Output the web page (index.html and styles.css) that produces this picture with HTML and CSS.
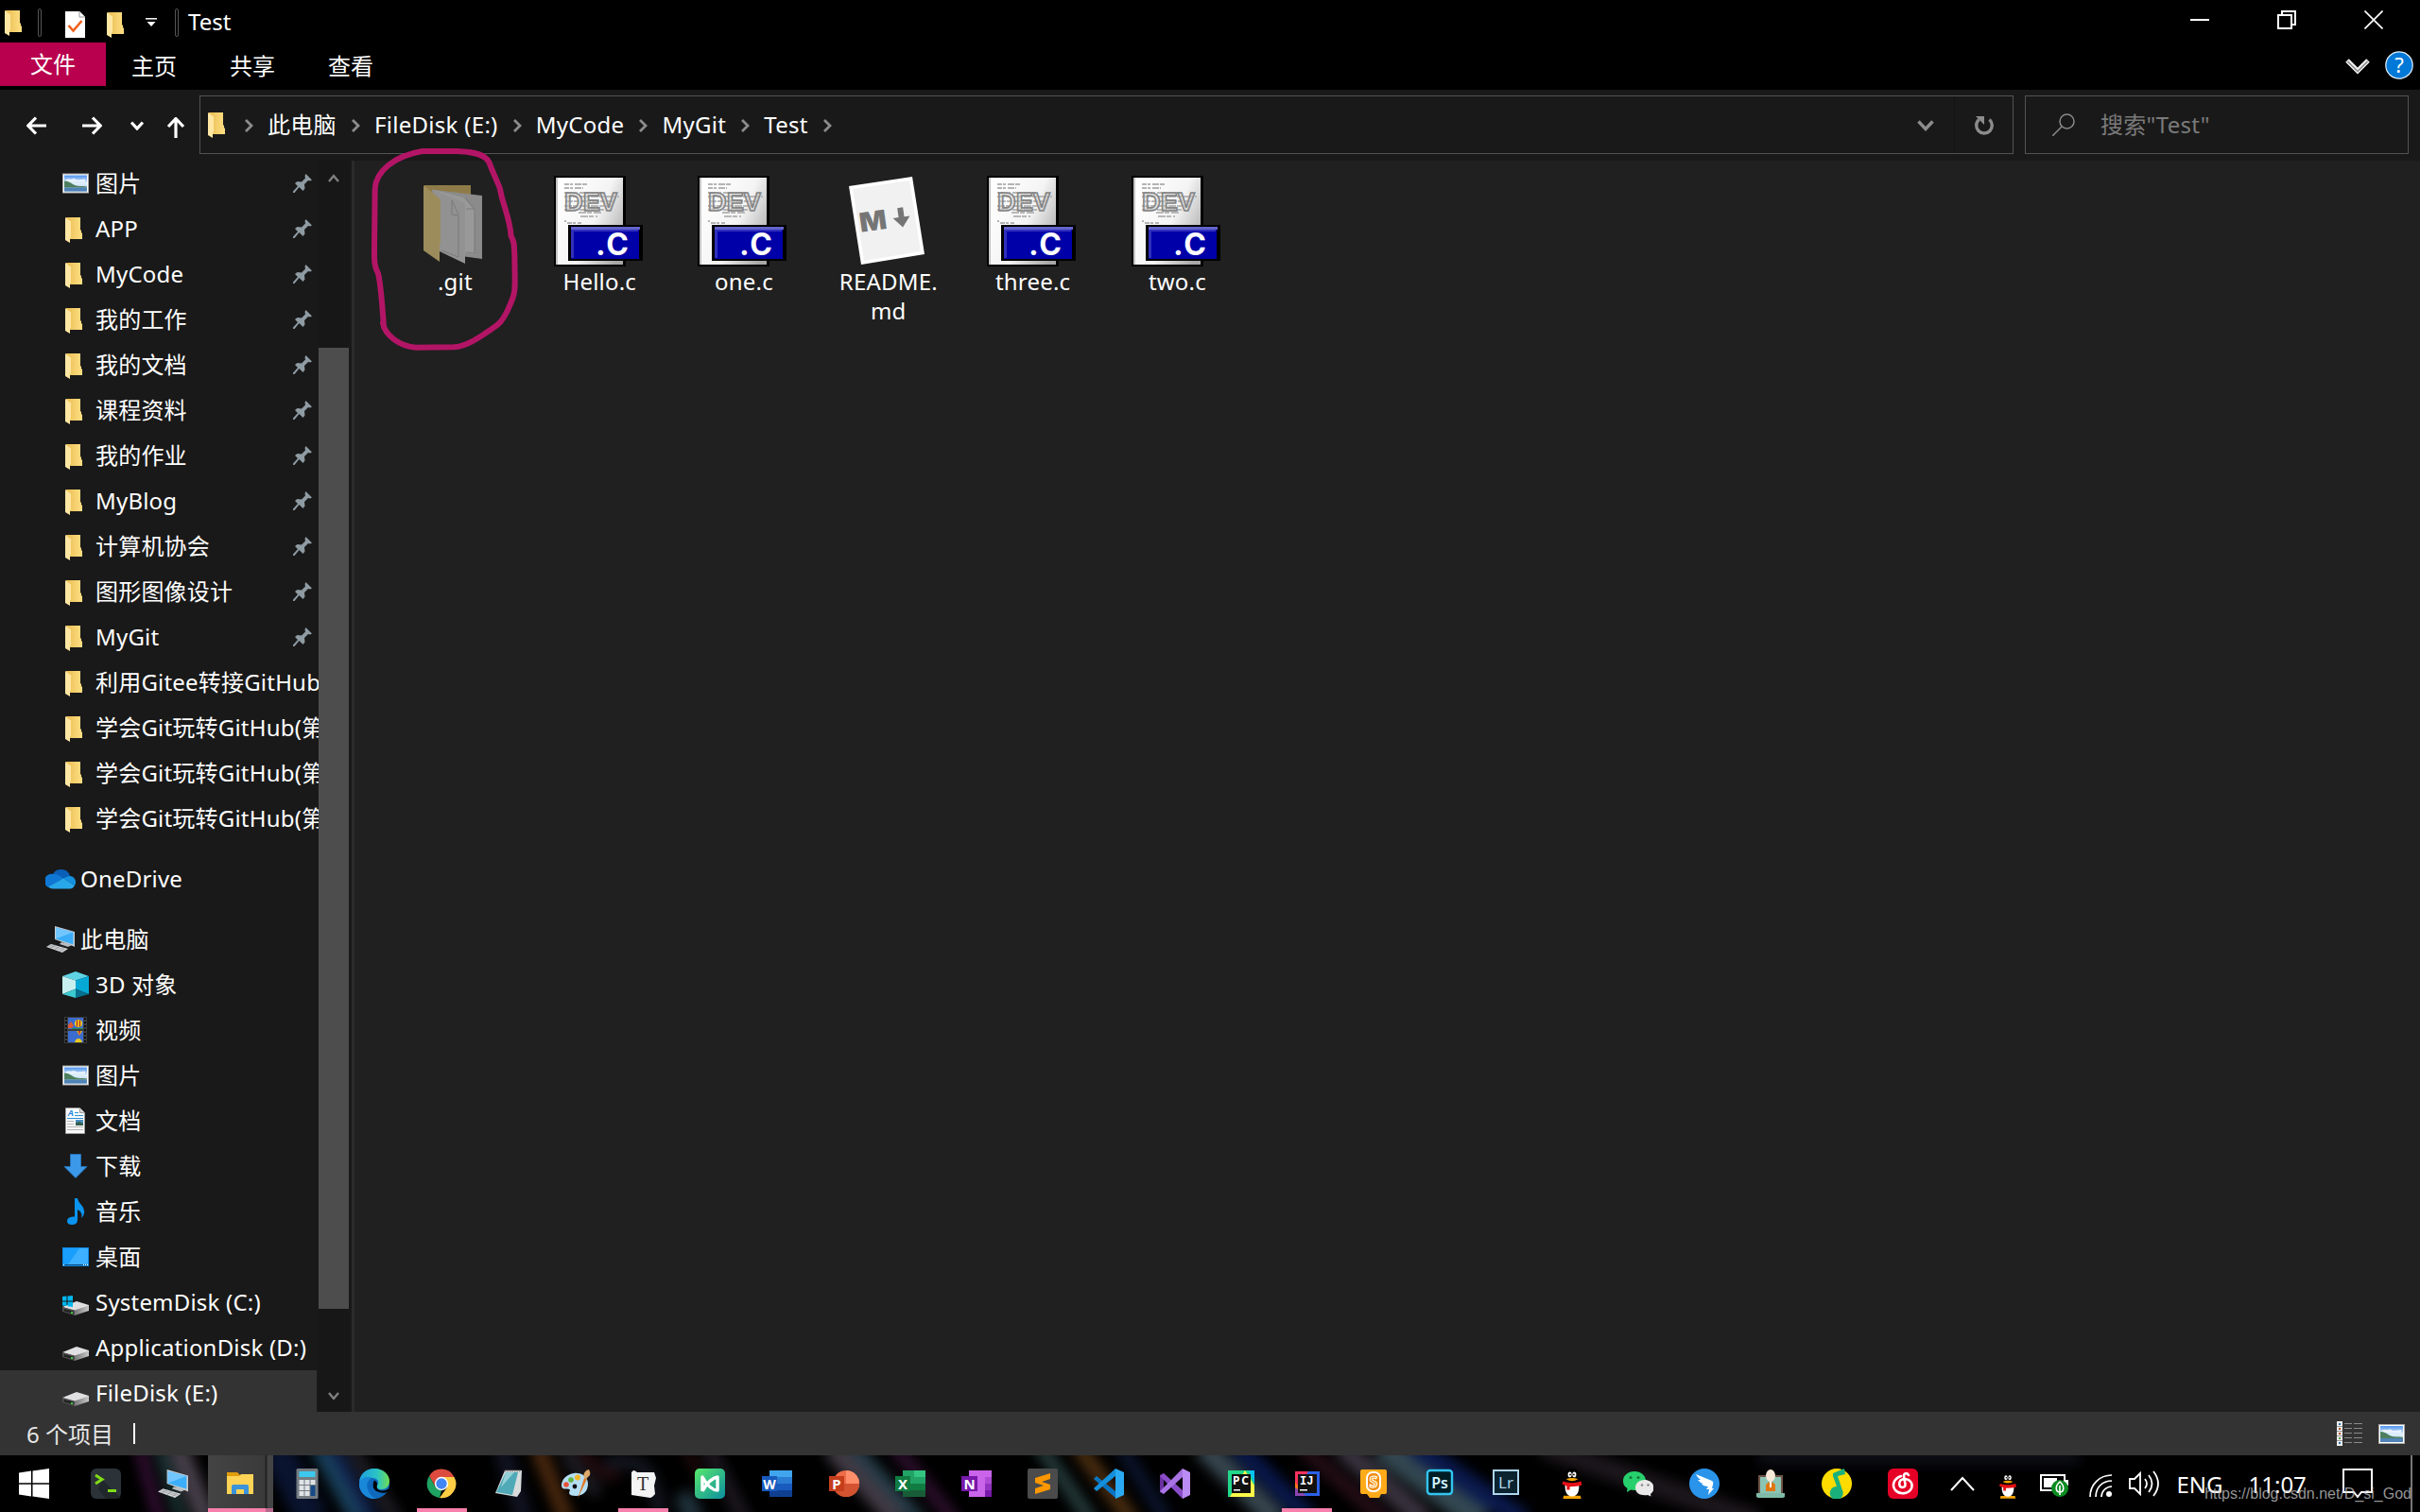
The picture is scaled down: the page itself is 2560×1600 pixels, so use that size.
FILE: index.html
```html
<!DOCTYPE html>
<html lang="zh-CN">
  <head>
    <meta charset="utf-8">
    <title>Test</title>
    <link rel="stylesheet" href="styles.css">
  </head>
  <body>
    <!-- shared icons -->
    <svg class="sprite">
      <defs>
        <linearGradient id="gFolder" x1="0" y1="0" x2="1" y2="0"><stop offset="0.2" stop-color="#eec45c"/><stop offset="1" stop-color="#ffdf84"/></linearGradient>
        <linearGradient id="gSky" x1="0" y1="0" x2="0" y2="1"><stop offset="0" stop-color="#4f94ee"/><stop offset="0.5" stop-color="#e4f2fc"/><stop offset="1" stop-color="#8fb8dc"/></linearGradient>
        <linearGradient id="gPaper" x1="0" y1="0.2" x2="1" y2="0.8"><stop offset="0" stop-color="#fff"/><stop offset="0.55" stop-color="#f4f4f4"/><stop offset="1" stop-color="#a8a8a8"/></linearGradient>
        <linearGradient id="gDisk" x1="0" y1="0" x2="1" y2="0"><stop offset="0" stop-color="#777"/><stop offset="1" stop-color="#c8c8c8"/></linearGradient>
      </defs>
      <symbol id="folder" viewBox="0 0 18 27">
        <path fill="url(#gFolder)" d="M1 0h15v13l1 1v2l1 1v6H4z"/>
        <path fill="#ffe7a3" d="M0 0l6 4.500v16l-1 1.500v5L0 24z"/>
      </symbol>
      <symbol id="picture" viewBox="0 0 28 21">
        <path fill="#a9a9a9" d="M0 0h28v21H0z"/>
        <path fill="#fff" d="M1 1h26v19H1z"/>
        <path fill="url(#gSky)" d="M2 2h24v17H2z"/>
        <path fill="#fff" opacity=".7" d="M3 7c3-2 5-1 7-1 2-2 4 0 6 1l8-1v3H3z"/>
        <path fill="#4d7f5e" d="M2 8c4 0 7 2 10 4s9 1 14 2v1H2z"/>
        <path fill="#5083b5" d="M2 15h24v4H2z"/>
      </symbol>
      <symbol id="pin" viewBox="0 0 20 20">
        <path fill="#8f9ba3" d="M13.500 0L20 6.500l-2 1-2-.5-4 4 .5 4.500-2 2.500-4-4L1.500 20H0v-1.500L5 13 2 10l2.500-2 4.500.5 4-4L12.500 2z"/>
      </symbol>
      <symbol id="pc" viewBox="0 0 30 28">
        <path fill="#c9cdd0" d="M9 0l21 6v16l-2-1L9 14z"/>
        <path fill="#3cadf8" d="M10 1.500l18.500 5v13L10 13.500z"/>
        <path fill="#72c6ff" d="M10 1.500l18.500 5L10 13.500z"/>
        <path fill="#b9bdc1" d="M16 17l5 1 6 2-4 2-9-3z"/>
        <path fill="#d8dbdd" d="M5 19l18 5-6 4-17-6z"/>
        <path stroke="#8b8f92" stroke-width=".6" fill="none" d="M3.500 20l17 5M2 21l17 5.500M10 20l-6 3M14 21.500l-5 3.500M19 23l-5 4"/>
      </symbol>
      <symbol id="disk" viewBox="0 0 28 16">
        <path fill="#e0e0e2" d="M0 7L15 1l13 4v1L13 11 0 7z"/>
        <path fill="#505152" d="M0 7l13 3.500V16L0 12z"/>
        <path fill="url(#gDisk)" d="M13 10.500L28 5.500v5.500L13 16z"/>
        <path fill="#222" d="M1.500 9l10 2.600v2.600L1.500 11.500z"/>
        <path fill="#39c636" d="M9 12h2v2H9z"/>
      </symbol>
      <symbol id="cfile" viewBox="0 0 96 96">
        <path fill="#000" d="M0 0h76v96H0z"/>
        <path fill="url(#gPaper)" d="M3 2h70v92H3z"/>
        <path fill="#c4c4c4" d="M2 2h2v92H2z"/>
        <g stroke="#b4b4b4" stroke-width="2" stroke-dasharray="5 1 3 2 7 1">
          <path d="M11 9h24M11 13h20M11 48h2M14 50h15"/>
        </g>
        <g stroke="#b8b8b8" stroke-width="2" stroke-dasharray="8 1 5 2 11 1">
          <path d="M11 18h40M11 22h58M12 27h52M11 32h51M11 36h43M26 39h24M28 43h18"/>
        </g>
        <text x="11" y="37" font-size="27" font-weight="bold" textLength="56" lengthAdjust="spacingAndGlyphs" fill="#ccc" fill-opacity=".5" stroke="#858585" stroke-width="1.600" class="glyph">DEV</text>
        <path fill="#000" d="M15 52h79v38H15z"/>
        <path fill="#0000a8" d="M18 54h72v34H18z"/>
        <path fill="#6464cc" d="M18 54h73v3H18z"/>
        <path fill="#3030bc" d="M18 57h71v2H18zM18 57h3v30h-3z"/>
        <text x="44" y="84" font-size="32" font-weight="700" textLength="35" fill="#fff" class="round">.C</text>
      </symbol>
      <symbol id="qq" viewBox="0 0 32 40">
        <path fill="#000" d="M16 0c7 0 10 5 9 13l5 13-4 2H6l-4-2 5-13C6 5 9 0 16 0z"/>
        <path fill="#f5a300" d="M5 36l22 0 1 4H4z"/>
        <path fill="#fff" d="M7 20h18c1 8-1 17-9 17S6 28 7 20z"/>
        <ellipse cx="13" cy="8" rx="2.500" ry="3.500" fill="#fff"/><ellipse cx="19" cy="8" rx="2.500" ry="3.500" fill="#fff"/>
        <circle cx="13.600" cy="8" r="1.100"/><circle cx="18.400" cy="8" r="1.100"/>
        <path fill="#f5a300" d="M8 14q8-3 16 0-8 5-16 0z"/>
        <path fill="#e60f14" d="M4 17q12 4 24 0l1 5q-6 2-16 2v4H9v-5l-6-2z"/>
      </symbol>
    </svg>

    <header class="titlebar">
      <div class="quick">
        <svg class="q-folder"><use href="#folder"/></svg>
        <i class="sep"></i>
        <svg class="q-check" viewBox="0 0 21 28"><path fill="#fff" d="M0 0h15l6 6v22H0z"/><path fill="#fff" stroke="#999" d="M15 0v6h6"/><path fill="none" stroke="#f0601c" stroke-width="2.600" d="M3.500 15l5 5.500 9-10.500"/></svg>
        <svg class="q-folder low"><use href="#folder"/></svg>
        <svg class="q-drop" viewBox="0 0 12 10"><path stroke="#fff" stroke-width="1.500" d="M0 .8h12"/><path fill="#fff" d="M1.500 4h9L6 9z"/></svg>
        <i class="sep last"></i>
        <span>Test</span>
      </div>
      <div class="winbtns">
        <svg viewBox="0 0 20 20"><path stroke="#fff" stroke-width="2" d="M0 10h20"/></svg>
        <svg viewBox="0 0 20 20"><path fill="none" stroke="#fff" stroke-width="2" d="M1 5h14v14H1zM5 5V1h14v14h-4"/></svg>
        <svg viewBox="0 0 20 20"><path stroke="#fff" stroke-width="1.600" d="M.5.500l19 19M19.500.500l-19 19"/></svg>
      </div>
    </header>

    <div class="ribbon">
      <div class="tab active">文件</div>
      <div class="tab">主页</div>
      <div class="tab">共享</div>
      <div class="tab">查看</div>
      <svg class="r-chev" viewBox="0 0 26 17"><path fill="none" stroke="#f0f0f0" stroke-width="5" d="M2 2l11 11L24 2"/><path fill="none" stroke="#888" stroke-width="1.500" d="M2.500 3l10.500 10.500L23.500 3"/></svg>
      <svg class="r-help" viewBox="0 0 30 30"><circle cx="15" cy="15" r="14.200" fill="#0078d7" stroke="#e6f2fb" stroke-width="1.200"/><text x="15" y="23" font-size="22" text-anchor="middle" fill="#fff">?</text></svg>
    </div>

    <nav class="navbar">
      <div class="arrows">
        <svg viewBox="0 0 22 22"><path d="M21 11H2M10 2.500L1.800 11l8.200 8.500"/></svg>
        <svg viewBox="0 0 22 22"><path d="M1 11h19M12 2.500l8.200 8.500-8.200 8.500"/></svg>
        <svg class="small" viewBox="0 0 14 10"><path d="M1 1.500l6 6.500 6-6.500"/></svg>
        <svg class="up" viewBox="0 0 20 22"><path d="M10 22V2M2 10l8-8.500 8 8.500"/></svg>
      </div>
      <div class="address">
        <svg class="a-folder"><use href="#folder"/></svg>
        <svg class="crumb" viewBox="0 0 10 14"><path d="M2 1l6 6-6 6"/></svg>
        <span>此电脑</span>
        <svg class="crumb" viewBox="0 0 10 14"><path d="M2 1l6 6-6 6"/></svg>
        <span>FileDisk (E:)</span>
        <svg class="crumb" viewBox="0 0 10 14"><path d="M2 1l6 6-6 6"/></svg>
        <span>MyCode</span>
        <svg class="crumb" viewBox="0 0 10 14"><path d="M2 1l6 6-6 6"/></svg>
        <span>MyGit</span>
        <svg class="crumb" viewBox="0 0 10 14"><path d="M2 1l6 6-6 6"/></svg>
        <span>Test</span>
        <svg class="crumb" viewBox="0 0 10 14"><path d="M2 1l6 6-6 6"/></svg>
        <svg class="a-drop" viewBox="0 0 18 12"><path d="M1.500 1.500L9 9.500l7.500-8"/></svg>
        <div class="refresh"><svg viewBox="0 0 22 22"><path fill="none" stroke="#8c8c8c" stroke-width="3.400" d="M16.500 4.500a8.300 8.300 0 1 1-11 0"/><path fill="#8c8c8c" d="M2 1h9v9z"/></svg></div>
      </div>
      <div class="search">
        <svg viewBox="0 0 24 24"><path fill="none" stroke="#8a8a8a" stroke-width="1.500" d="M10 14L0 24M23 8.500a7.500 7.500 0 1 1-15 0 7.500 7.500 0 0 1 15 0"/></svg>
        <span>搜索"Test"</span>
      </div>
    </nav>

    <main class="main">
      <aside class="tree">
        <ul class="rows">
          <li><svg class="ic"><use href="#picture"/></svg><span>图片</span><svg class="pin"><use href="#pin"/></svg></li>
          <li><svg class="ic fold"><use href="#folder"/></svg><span>APP</span><svg class="pin"><use href="#pin"/></svg></li>
          <li><svg class="ic fold"><use href="#folder"/></svg><span>MyCode</span><svg class="pin"><use href="#pin"/></svg></li>
          <li><svg class="ic fold"><use href="#folder"/></svg><span>我的工作</span><svg class="pin"><use href="#pin"/></svg></li>
          <li><svg class="ic fold"><use href="#folder"/></svg><span>我的文档</span><svg class="pin"><use href="#pin"/></svg></li>
          <li><svg class="ic fold"><use href="#folder"/></svg><span>课程资料</span><svg class="pin"><use href="#pin"/></svg></li>
          <li><svg class="ic fold"><use href="#folder"/></svg><span>我的作业</span><svg class="pin"><use href="#pin"/></svg></li>
          <li><svg class="ic fold"><use href="#folder"/></svg><span>MyBlog</span><svg class="pin"><use href="#pin"/></svg></li>
          <li><svg class="ic fold"><use href="#folder"/></svg><span>计算机协会</span><svg class="pin"><use href="#pin"/></svg></li>
          <li><svg class="ic fold"><use href="#folder"/></svg><span>图形图像设计</span><svg class="pin"><use href="#pin"/></svg></li>
          <li><svg class="ic fold"><use href="#folder"/></svg><span>MyGit</span><svg class="pin"><use href="#pin"/></svg></li>
          <li><svg class="ic fold"><use href="#folder"/></svg><span>利用Gitee转接GitHub</span></li>
          <li><svg class="ic fold"><use href="#folder"/></svg><span>学会Git玩转GitHub(第</span></li>
          <li><svg class="ic fold"><use href="#folder"/></svg><span>学会Git玩转GitHub(第</span></li>
          <li><svg class="ic fold"><use href="#folder"/></svg><span>学会Git玩转GitHub(第</span></li>
          <li class="top"><svg class="ic" viewBox="0 0 32 21"><path fill="#0a5fb8" d="M7 8a10 10 0 0 1 19-1l-6 6z"/><path fill="#0f78d4" d="M8 5.500c4-.5 6 1 11 4.500L3 19.500A7.500 7.500 0 0 1 8 5.500z"/><path fill="#1490df" d="M19 10l6-2.500a6.500 6.500 0 0 1 6 10z"/><path fill="#28a8ea" d="M19 10l12 7.500q-2 3.500-5 3.500H8q-3 0-5-2z"/></svg><span>OneDrive</span></li>
          <li class="top"><svg class="ic"><use href="#pc"/></svg><span>此电脑</span></li>
          <li><svg class="ic" viewBox="0 0 28 28"><path fill="#5fd3e4" d="M0 5l14-5 14 5-14 4.500z"/><path fill="#c6f0f0" d="M0 5l14 4.500v9L0 24z"/><path fill="#06a9d6" d="M28 5L14 9.500v9L28 24z"/><path fill="#3cc9cf" d="M0 24l14-5.500V28z"/><path fill="#04708f" d="M28 24l-14-5.500V28z"/></svg><span>3D 对象</span></li>
          <li><svg class="ic" viewBox="0 0 28 28"><path fill="#3d3d3d" d="M2 0h24v28H2z"/><path fill="#3b6cd0" d="M6 1h16v12H6zM6 15h16v12H6z"/><path stroke="#0c0c0c" stroke-width="2" stroke-dasharray="2 2" d="M4 1v27M24 1v27"/><circle cx="17" cy="7" r="4" fill="#f0d020"/><path stroke="#b02020" stroke-width="1.200" d="M15.500 3.500v7M18.500 3.500v7"/><path fill="#e05a30" d="M6 9l3-4 3 4-2 3H6z"/><path fill="#1e9048" d="M10 12h12v1H10z"/><path fill="#e0b020" d="M15 15h6l-3 5z"/><path fill="#c02828" d="M17 15h2l-1 5z"/><path fill="#e8c820" d="M13 27q1-4 4-4t4 4z"/></svg><span>视频</span></li>
          <li><svg class="ic"><use href="#picture"/></svg><span>图片</span></li>
          <li><svg class="ic" viewBox="0 0 28 28"><path fill="#fafafa" stroke="#9c9c9c" d="M3.500.500h15l5 5v22h-20z"/><path fill="#ddd" stroke="#9c9c9c" d="M18.500.500v5h5"/><text x="5.500" y="9" font-size="9" font-weight="bold" font-style="italic" fill="#1583d8" class="glyph">A</text><path stroke="#2a92d8" d="M13 5.500h4M13 8.500h9M5 11.500h17"/><path stroke="#b5b5b5" d="M5 14.500h7M5 17.500h7M5 20.500h17M5 23.500h17"/><path fill="#4a8fc0" d="M14 13h8v6h-8z"/><path fill="#35604e" d="M14 16l4-1 4 2v2h-8z"/></svg><span>文档</span></li>
          <li><svg class="ic" viewBox="0 0 28 28"><path fill="#3c98e8" stroke="#2478c4" stroke-width=".8" d="M8.500 1.500h11v13h6.500L14 26.500 2 14.500h6.500z"/></svg><span>下载</span></li>
          <li><svg class="ic" viewBox="0 0 28 28"><path fill="#0a94f0" d="M13 0h3q1 4 4 7 4 4 3 9-1 4-3 5 2-6-4-9v11q0 5-6 5-5 0-5-4t6-4.500h2z"/></svg><span>音乐</span></li>
          <li><svg class="ic" viewBox="0 0 28 20"><path fill="#0b8ae6" d="M0 0h28v20H0z"/><path fill="#1a9efc" d="M1 1h26v17H1z"/><path fill="#3db0ff" d="M18 1h9v17H6z"/><path fill="#0a4a80" d="M1 18h26v1H1z"/><path stroke="#fff" stroke-dasharray="1 1" d="M1 18.500h1M22 18.500h5"/></svg><span>桌面</span></li>
          <li><svg class="ic sys" viewBox="0 0 28 21"><use href="#disk" y="5" width="28" height="16"/><path fill="#00b7f0" d="M0 1l4.500-.5v5H0zM5.500.400L11 0v5.500H5.500zM0 6.500h4.500V11L0 10.500zM5.500 6.500H11V12l-5.500-.8z"/></svg><span>SystemDisk (C:)</span></li>
          <li><svg class="ic drive"><use href="#disk"/></svg><span>ApplicationDisk (D:)</span></li>
          <li class="selected"><svg class="ic drive"><use href="#disk"/></svg><span>FileDisk (E:)</span></li>
        </ul>
        <div class="scroll">
          <svg viewBox="0 0 12 9"><path d="M1 8l5-6 5 6"/></svg>
          <i class="thumb"></i>
          <svg viewBox="0 0 12 9"><path d="M1 1l5 6 5-6"/></svg>
        </div>
      </aside>

      <section class="files">
        <div class="file">
          <svg viewBox="0 0 96 96">
            <path fill="#8f7b48" d="M16 10h49v70H16z"/>
            <path fill="#8b8b8b" d="M27 15l50 6v67l-22-3z"/>
            <path fill="#999" d="M27 15l30 8 12 12v48l-20-2z"/>
            <path fill="none" stroke="#6c6c6c" stroke-width=".6" d="M60 24l9 12v46l-9-1M60 35h9"/>
            <path fill="#929292" d="M24 14l35 15v64L32 80z"/>
            <path fill="none" stroke="#6c6c6c" stroke-width=".6" d="M34 79l18 7V42l-7-1V26l7 15"/>
            <path fill="#9c8b5b" d="M15 10l18 15v45l-1 2v19L15 79z"/>
          </svg>
          <span>.git</span>
        </div>
        <div class="file"><svg><use href="#cfile"/></svg><span>Hello.c</span></div>
        <div class="file"><svg><use href="#cfile"/></svg><span>one.c</span></div>
        <div class="file">
          <svg viewBox="0 0 96 96">
            <path fill="#fff" d="M7 11l67-10 13 82-67 11z"/>
            <path fill="#f1f1f1" d="M11 14l60-9 12 75-60 10z"/>
            <g transform="rotate(-8 46 48)"><text x="18" y="56" font-size="28" font-weight="900" textLength="29" lengthAdjust="spacingAndGlyphs" fill="#757575" class="round">M</text><path fill="#757575" d="M60 36h6v10h6l-9 11-9-11h6z"/></g>
          </svg>
          <span>README.<br>md</span>
        </div>
        <div class="file"><svg><use href="#cfile"/></svg><span>three.c</span></div>
        <div class="file"><svg><use href="#cfile"/></svg><span>two.c</span></div>
        <!-- hand drawn marker round the .git folder -->
        <svg class="marker" viewBox="0 0 480 240">
          <path transform="scale(.33333)" d="M78 588C72 500 68 450 60 418C46 395 48 370 48 330L50 150C52 95 110 45 200 30L310 30C370 32 400 42 412 65C425 100 440 130 447 150C455 200 478 240 482 300C494 320 491 330 493 360L494 430C495 480 492 490 470 537C450 577 440 580 420 595C380 622 340 650 300 652L180 653C130 650 82 615 75 575"/>
        </svg>
      </section>
    </main>

    <footer class="status">
      <span>6 个项目</span><i></i>
      <svg class="s-list" viewBox="0 0 28 26"><path fill="#eee" d="M0 0h6v26H0z"/><path stroke="#8a8a8a" d="M8 2.500h8M18 2.500h9M8 7.500h8M18 7.500h9M8 12.500h8M18 12.500h9M8 17.500h8M18 17.500h9M8 22.500h8M18 22.500h9"/><path stroke="#999" d="M0 5.500h6M0 10.500h6M0 15.500h6M0 20.500h6"/><path fill="#2f75b5" d="M2 2h2v2H2zM2 22h2v2H2z"/><path fill="#b04a20" d="M2 7h2v2H2zM2 12h2v2H2z"/><path fill="#5aa04a" d="M2 17h2v2H2z"/></svg>
      <svg class="s-pic"><use href="#picture"/></svg>
    </footer>

    <div class="taskbar">
      <svg class="wall" viewBox="0 0 2560 60" preserveAspectRatio="none">
        <g class="streaks">
          <path stroke="#4a164a" stroke-width="10" d="M147-10l22 80"/>
          <path stroke="#264a4a" stroke-width="10" d="M168-10l24 80"/>
          <path stroke="#544b58" stroke-width="22" d="M187-10l32 80"/>
          <path stroke="#0c1838" stroke-width="34" d="M290-10l42 80"/>
          <path stroke="#1d4c6c" stroke-width="18" d="M336-10l44 80"/>
          <path stroke="#14285c" stroke-width="12" d="M352-10l44 80"/>
          <path stroke="#26242c" stroke-width="14" d="M370-10l50 80"/>
          <path stroke="#15182a" stroke-width="18" d="M530-10l26 80"/>
          <path stroke="#5c3212" stroke-width="16" d="M568-10l32 80"/>
          <path stroke="#25252c" stroke-width="14" d="M598-10q10 30 36 50"/>
          <path stroke="#321016" stroke-width="10" d="M615-10q15 35 40 30"/>
          <path stroke="#181d28" stroke-width="14" d="M640 8c50-10 50 20 60 60"/>
          <path stroke="#3c1414" stroke-width="6" d="M722-10l25 40"/>
          <path stroke="#25202a" stroke-width="14" d="M748-10l40 80"/>
          <path stroke="#263c48" stroke-width="20" d="M722 40l14 30"/>
          <path stroke="#4c4450" stroke-width="24" d="M880-10l72 80"/>
          <path stroke="#2c4856" stroke-width="14" d="M902-10l72 80"/>
          <path stroke="#381438" stroke-width="14" d="M946-10l64 80"/>
          <path stroke="#2f4a4a" stroke-width="14" d="M1100-10l55 80"/>
          <path stroke="#5c3814" stroke-width="16" d="M1140-10l58 80"/>
          <path stroke="#0e1a38" stroke-width="14" d="M1185-10l50 80"/>
          <path stroke="#40525c" stroke-width="24" d="M1272-10l80 80"/>
          <path stroke="#0a1c58" stroke-width="20" d="M1308-10l80 80"/>
          <path stroke="#32121e" stroke-width="14" d="M1376-10l90 80"/>
          <path stroke="#443c4a" stroke-width="22" d="M1418-10l90 80"/>
          <path stroke="#3c5560" stroke-width="30" d="M1462-10l106 80"/>
          <path stroke="#0c1e5c" stroke-width="22" d="M1496-10l116 80"/>
          <path stroke="#221c22" stroke-width="22" d="M1630-10l230 80"/>
          <path stroke="#10121c" stroke-width="20" d="M1860 0h340"/>
        </g>
      </svg>
      <div class="start"><svg viewBox="0 0 32 32"><path fill="#fff" d="M0 4.600l13-2v12.700H0zM14.500 2.400L32 0v15.300H14.500zM0 16.700h13v12.700l-13-2zM14.500 16.700H32V32l-17.500-2.400z"/></svg></div>
      <div class="apps wide">
        <div><svg viewBox="0 0 32 32"><rect width="32" height="32" rx="6" fill="#2c3338"/><path fill="#20262a" d="M12 12l20 19-6 1H16l-8-10z"/><path fill="none" stroke="#7fdc14" stroke-width="3" d="M5 7l7 4.500L5 16"/><path stroke="#7fdc14" stroke-width="3" d="M18 23.500h9"/></svg></div>
        <div><svg viewBox="0 0 30 28"><use href="#pc"/></svg></div>
        <div class="open stacked"><svg viewBox="0 0 32 32"><path fill="#e09c0c" d="M2 4h11l3 3H30v6H2z"/><path fill="#ffd355" d="M2 8h13l2-2h13v21H2z"/><path fill="#3a93da" d="M7 27V19q0-2 2-2h14q2 0 2 2v8h-5v-5h-8v5z"/></svg></div>
        <div><svg viewBox="0 0 32 32"><rect x="4.500" width="23" height="32" rx="1.500" fill="#747c82"/><path fill="#3cc8ee" d="M7.500 3h17v6h-17z"/><path fill="#dfe3e6" d="M7.500 12h5v5h-5zM13.500 12h5v5h-5zM19.500 12h5v5h-5zM7.500 18h5v5h-5zM13.500 18h5v5h-5zM7.500 24h5v5h-5zM13.500 24h5v5h-5z"/><path fill="#154a86" d="M19.500 18h5v11h-5z"/></svg></div>
        <div><svg viewBox="0 0 32 32"><linearGradient id="gEdge"><stop offset="0" stop-color="#1d9fe0"/><stop offset=".6" stop-color="#2cc4c4"/><stop offset="1" stop-color="#70dc50"/></linearGradient><circle cx="16" cy="16" r="16" fill="#0e68bc"/><path fill="url(#gEdge)" d="M0 14C1 5 8 0 16 0c10 0 16 7 16 13 0 6-4 9-8 9-5 0-6-2-5-4 3-4 0-8-5-8C8 9 3 11 0 14z"/><path fill="#1a88d8" d="M0 15c3-6 9-7 13-5-4 2-6 7-4 12 2 6 6 9 9 10C8 33-1 25 0 15z"/><path fill="#000" d="M19 17q-2 5 4 6.500 5 .5 8-2l1 2-4 2q-10 1-13-5-1-5 1-8 3 1 3 4.500z"/></svg></div>
        <div class="open"><svg viewBox="0 0 32 32"><path fill="#dc4b3e" d="M3 8a15 15 0 0 1 26.500 1H16L9 18z"/><path fill="#1ea362" d="M3 8l7 12 6 3-2 8A15 15 0 0 1 3 8z"/><path fill="#ffce44" d="M16 9h13.500A15 15 0 0 1 14 31l8-11z"/><circle cx="16" cy="16" r="7.200" fill="#fff"/><circle cx="16" cy="16" r="5.700" fill="#4285f4"/></svg></div>
        <div><svg viewBox="0 0 32 32"><path fill="#d8dcdc" d="M12 2h18l-1 22-4 6L2 26z"/><path fill="#4fa9b6" d="M13 4h13l-6 24L3 25z"/><path fill="#94d0d6" d="M13 4h9L8 20z"/><path stroke="#888" stroke-width="2" stroke-dasharray="1.500 1" d="M12 2.500h17"/></svg></div>
        <div><svg viewBox="0 0 32 32"><path fill="#b4def4" d="M14 5c8-1 15 4 15 11 0 8-5 13-13 13-7 0-8-3-6-6 0-3-9 1-9-5C1 11 7 6 14 5z"/><circle cx="15" cy="19" r="2.400" fill="#111"/><circle cx="6" cy="17" r="2.800" fill="#e85238"/><circle cx="11" cy="12" r="2.800" fill="#62b63e"/><circle cx="18" cy="9.500" r="3" fill="#f0b62a"/><path fill="#e27a22" d="M25 10l3 1-10 21z"/><path fill="#dba869" d="M24 8q1-6 6-7 2 3 1 6l-4 4z"/></svg></div>
        <div class="open"><svg viewBox="0 0 32 32"><path fill="#f4f4f4" d="M4 4l2-2q2 0 4 2l18 0 2 6-2 8 1 9-3 3-2 1-20-3 0-8z"/><text x="16" y="23" font-size="20" text-anchor="middle" fill="#333" class="serif">T</text></svg></div>
        <div><svg viewBox="0 0 32 32"><linearGradient id="gMind" x2="1" y2="1"><stop offset="0" stop-color="#58e86c"/><stop offset="1" stop-color="#0c8fa0"/></linearGradient><rect width="32" height="32" rx="5" fill="url(#gMind)"/><path fill="none" stroke="#fff" stroke-width="3.400" stroke-linejoin="round" d="M8 24V9q8 14 16 14V9Q16 10 8 24"/></svg></div>
        <div><svg viewBox="0 0 32 32"><path fill="#41a5ee" d="M8 2h24v7H8z"/><path fill="#2b7cd3" d="M8 9h24v7H8z"/><path fill="#185abd" d="M8 16h24v7H8z"/><path fill="#103f91" d="M8 23h24v7H8z"/><path fill="#185abd" d="M0 8h16v16H0z"/><text x="8" y="21.500" font-size="14" font-weight="bold" text-anchor="middle" fill="#fff">W</text></svg></div>
      </div>
      <div class="apps">
        <div><svg viewBox="0 0 32 32"><circle cx="18" cy="16" r="14" fill="#ed6c47"/><path fill="#ff8f6b" d="M18 2a14 14 0 0 1 14 14H18z"/><path fill="#d35230" d="M4 16h28a14 14 0 0 1-28 0z"/><path fill="#c43e1c" d="M0 8h16v16H0z"/><text x="8" y="21.500" font-size="15" font-weight="bold" text-anchor="middle" fill="#fff">P</text></svg></div>
        <div><svg viewBox="0 0 32 32"><path fill="#21a366" d="M8 2h12v14H8z"/><path fill="#33c481" d="M20 2h12v7H20z"/><path fill="#21a366" d="M20 9h12v7H20z"/><path fill="#107c41" d="M8 16h24v7H8z"/><path fill="#185c37" d="M8 23h24v7H8z"/><path fill="#107c41" d="M0 8h16v16H0z"/><text x="8" y="21.500" font-size="15" font-weight="bold" text-anchor="middle" fill="#fff">X</text></svg></div>
        <div><svg viewBox="0 0 32 32"><path fill="#ca64ea" d="M8 2h24v28H8z"/><path fill="#ae4bd5" d="M25 9h7v7h-7z"/><path fill="#9332bf" d="M25 16h7v7h-7z"/><path fill="#7719aa" d="M25 23h7v7h-7zM0 8h17v16H0z"/><text x="8.500" y="21.500" font-size="15" font-weight="bold" text-anchor="middle" fill="#fff">N</text></svg></div>
        <div><svg viewBox="0 0 32 32"><rect width="32" height="32" rx="2" fill="#4b4b4b"/><path fill="#ff9800" d="M8 10l16-5v6l-9 3 9 3v5L8 27v-6l9-3-9-3z"/></svg></div>
        <div><svg viewBox="0 0 32 32"><path fill="#0a74c0" d="M0 11l3-3 20 16v7z"/><path fill="#1490dc" d="M0 21l3 3L23 8V0z"/><path fill="#2aaaf2" d="M23 0l9 4v24l-9 4z"/></svg></div>
        <div><svg viewBox="0 0 32 32"><path fill="#6a2fa0" d="M0 7l4-2v22l-4-2z"/><path fill="#8a4cc8" d="M0 8l4-3 20 18v9z"/><path fill="#a873e2" d="M0 24l4 3L24 9V0z"/><path fill="#bb8cf4" d="M24 0l8 4v24l-8 4z"/></svg></div>
        <div><svg viewBox="0 0 32 32"><path fill="#21d789" d="M2 2h28v28H2z"/><path fill="#fcf84a" d="M20 2l10 16v12H4z"/><path fill="#07c3f2" d="M24 2h6v14z"/><path fill="#111" d="M6 6h20v20H6z"/><text x="7" y="17" font-size="12" font-weight="bold" fill="#fff" textLength="17">PC</text><path fill="#fff" d="M8 22h7v1.500H8z"/></svg></div>
        <div class="open"><svg viewBox="0 0 32 32"><path fill="#2d60e8" d="M3 3h26v26H3z"/><path fill="#fe315d" d="M3 3h14L5 22H3z"/><path fill="#f97a12" d="M3 14l10 15H3z"/><path fill="#8a45b0" d="M3 20l12 9H3z"/><path fill="#111" d="M6 6h20v20H6z"/><text x="8" y="17" font-size="12" font-weight="bold" fill="#fff" class="mono">IJ</text><path fill="#fff" d="M8 22h8v1.500H8z"/></svg></div>
        <div><svg viewBox="0 0 32 32"><path fill="#ffab19" d="M4 1h24q2 0 2 2v22q0 2-2 2h-4l-2 4H12l-3-4H4q-2 0-2-2V3q0-2 2-2z"/><rect x="9" y="4" width="14" height="20" rx="6" fill="#ee8c10" stroke="#fff" stroke-width="2"/><text x="16" y="20" font-size="16" font-weight="bold" text-anchor="middle" fill="#ff9b10" stroke="#fff" stroke-width="1">S</text></svg></div>
        <div><svg viewBox="0 0 32 32"><rect x="3" y="2" width="26" height="25" rx="3" fill="#001d26" stroke="#31c5f0" stroke-width="2.400"/><text x="16" y="20.500" font-size="16" font-weight="600" text-anchor="middle" fill="#d4f4ff">Ps</text></svg></div>
        <div><svg viewBox="0 0 32 32"><path fill="#0c2430" stroke="#add5ec" stroke-width="2" d="M3 2h26v25H3z"/><text x="16" y="20.500" font-size="17" text-anchor="middle" fill="#add5ec">Lr</text></svg></div>
        <div><svg><use href="#qq"/></svg></div>
        <div><svg viewBox="0 0 32 32"><path fill="#27d06c" d="M12 3c7 0 12 4.500 12 10s-5 10-12 10l-4-.5L4 25l.5-4C1 19 0 16 0 13 0 7.500 5 3 12 3z"/><path fill="#e9e9e9" d="M23 12c5 0 9.500 3.500 9.500 8.500 0 3-1.500 5-3.500 6.500l.5 2.500-3.500-1.500c-7 1-13-1.500-13-7.500 0-5 4-8.500 10-8.500z"/><g fill="#17743c"><circle cx="8" cy="9.500" r="1.500"/><circle cx="16" cy="9.500" r="1.500"/></g><g fill="#888"><circle cx="20" cy="17.500" r="1.300"/><circle cx="26.500" cy="17.500" r="1.300"/></g></svg></div>
        <div><svg viewBox="0 0 32 32"><circle cx="16" cy="16" r="16" fill="#2a94ea"/><path fill="#fff" d="M7 6l17 7q2 1 1 4l-1 4h2l-6 7 1-6h-3l2-3q-5 0-7-3h2q-4-1-6-4h3Q8 9 7 6z"/></svg></div>
        <div><svg viewBox="0 0 32 32"><path fill="#6e5546" d="M3 7h26v19H3z"/><path fill="#8cc4b4" d="M5 9h22v17H5z"/><path fill="#7fbba8" d="M1 26h30v4l-2 1H3l-2-1z"/><ellipse cx="16" cy="7.500" rx="5" ry="6.500" fill="#f6e9d8"/><path fill="#e07712" d="M11 24v-7q5-6 10 0v7z"/><path fill="#fff" d="M15 14h2v6h-2z"/></svg></div>
        <div><svg viewBox="0 0 32 32"><circle cx="16" cy="16" r="16" fill="#ffdc00"/><path fill="#19b07c" d="M12 5l12-5 1 6-8 2 5 15a7 7 0 1 1-6-4L12 8z"/></svg></div>
        <div><svg viewBox="0 0 32 32"><rect width="32" height="32" rx="6" fill="#e60026"/><path fill="none" stroke="#fff" stroke-width="2.600" stroke-linecap="round" d="M14 8c-8 3-10 10-6 15 5 5 14 4 17-2 2-6-2-10-8-10-6 1-6 8-2 9 4 0 4-3 3-6l-1-6c0-3 3-4 5-1"/></svg></div>
      </div>
      <div class="tray">
        <svg class="t-up" viewBox="0 0 26 16"><path fill="none" stroke="#fff" stroke-width="2" d="M1 15L13 2l12 13"/></svg>
        <svg class="t-qq"><use href="#qq"/></svg>
        <svg class="t-bat" viewBox="0 0 30 24"><path fill="none" stroke="#fff" stroke-width="2" d="M1 1h25v16H1z"/><path fill="#fff" d="M4 4h14v10H4zM27 6h3v6h-3z"/><circle cx="21" cy="15" r="9" fill="#0c8c22"/><path fill="none" stroke="#fff" stroke-width="1.600" d="M21 8c-6 5-4 11 0 11s6-6 0-11zM21 12v10"/></svg>
        <svg class="t-net" viewBox="0 0 24 24"><g fill="none" stroke="#fff" stroke-width="1.700"><path d="M1 24C1 11 11 1 24 1"/><path d="M7 24C7 14 14 7 24 7"/><path d="M13 24c0-6 5-11 11-11"/></g><circle cx="21" cy="21" r="3" fill="#fff"/></svg>
        <svg class="t-vol" viewBox="0 0 32 28"><g fill="none" stroke="#fff" stroke-width="1.800"><path d="M1 9h5l6-6v22l-6-6H1z"/><path d="M17 9q4 5 0 10M21 5q7 9 0 18M26 1q10 13 0 26"/></g></svg>
        <span class="lang">ENG</span>
        <span class="clock">11:07</span>
        <svg class="t-note" viewBox="0 0 32 32"><path fill="none" stroke="#fff" stroke-width="2" d="M1 1h30v24H20l-4 5-4-5H1z"/></svg>
        <i class="desk"></i>
      </div>
      <div class="mark">https://blog.csdn.net/D_si_God</div>
    </div>
  </body>
</html>
```

FILE: styles.css
```css
* {
  box-sizing: border-box;
  margin: 0;
  padding: 0;
}

body {
  display: flex;
  flex-direction: column;
  width: 2560px;
  height: 1600px;
  overflow: hidden;
  background: #000;
  color: #fff;
  font-family: "Noto Sans", "Noto Sans CJK SC", sans-serif;
  font-size: 24px;
  line-height: 31px;
  white-space: nowrap;
}

svg {
  display: block;
  flex: none;
}

.sprite {
  position: absolute;
  width: 0;
  height: 0;
}

.glyph {
  font-family: "Liberation Sans", sans-serif;
}

.round {
  font-family: Inter, sans-serif;
}

.serif {
  font-family: "Liberation Serif", serif;
}

.mono {
  font-family: "Liberation Mono", monospace;
}

/* title bar */
.titlebar {
  display: flex;
  justify-content: space-between;
  height: 45px;
}

.quick {
  display: flex;
  align-items: center;
  padding: 0 0 0 5px;
  height: 48px;
}

.quick span {
  margin-bottom: 4px;
}

.q-folder {
  width: 18px;
  height: 27px;
}

.q-folder.low {
  margin: 5px 23px 0 23px;
}

.q-check {
  width: 21px;
  height: 28px;
  margin: 3px 0 0 25px;
}

.q-drop {
  width: 12px;
  height: 10px;
  margin-right: 19px;
}

.sep {
  width: 4px;
  height: 30px;
  margin-left: 17px;
  border: 1px solid #555;
  border-radius: 2px;
}

.sep.last {
  margin: 0 10px 0 0;
}

.winbtns {
  display: flex;
  gap: 72px;
  padding: 11px 39px 0 0;
}

.winbtns svg {
  width: 20px;
  height: 20px;
}

/* ribbon tabs */
.ribbon {
  display: flex;
  height: 50px;
}

.tab {
  width: 104px;
  padding: 9px 2px 0 0;
  text-align: center;
}

.tab.active {
  width: 112px;
  height: 46px;
  padding: 7px 0 0;
  background: #b8004e;
}

.r-chev {
  width: 26px;
  height: 17px;
  margin: 17px 16px 0 auto;
}

.r-help {
  width: 30px;
  height: 30px;
  margin: 9px 7px 0 0;
}

/* navigation bar */
.navbar {
  display: flex;
  height: 75px;
  padding: 6px 12px 0 28px;
  background: #191919;
}

.arrows {
  display: flex;
  align-items: center;
  width: 183px;
  height: 63px;
}

.arrows svg {
  width: 22px;
  height: 22px;
  margin-right: 36px;
  fill: none;
  stroke: #fff;
  stroke-width: 3.2;
}

.arrows .small {
  width: 14px;
  height: 10px;
  margin: 0 24px 0 -6px;
}

.arrows .up {
  width: 20px;
  margin: 4px 0 0;
}

.address {
  display: flex;
  align-items: center;
  width: 1919px;
  height: 62px;
  border: 1px solid #535353;
  padding-left: 8px;
}

.address span {
  margin-bottom: 2px;
  letter-spacing: 0.3px;
}

.a-folder {
  width: 18px;
  height: 27px;
  margin-right: 5px;
}

.crumb {
  width: 10px;
  height: 14px;
  margin: 2px 15px 0;
  fill: none;
  stroke: #8c8c8c;
  stroke-width: 2.8;
}

.a-drop {
  width: 18px;
  height: 12px;
  margin: 2px 21px 0 auto;
  fill: none;
  stroke: #8c8c8c;
  stroke-width: 3.4;
}

.refresh {
  width: 62px;
  height: 60px;
  padding: 20px 0 0 20px;
  border-left: 1px solid #141414;
}

.refresh svg {
  width: 22px;
  height: 22px;
}

.search {
  display: flex;
  align-items: center;
  width: 406px;
  height: 62px;
  margin-left: 12px;
  padding-left: 28px;
  border: 1px solid #535353;
  color: #7a7a7a;
}

.search svg {
  width: 24px;
  height: 24px;
  margin-right: 27px;
}

.search span {
  margin-bottom: 2px;
  letter-spacing: 0.3px;
}

/* folder tree */
.main {
  display: flex;
  height: 1324px;
  background: #202020;
}

.tree {
  display: flex;
  width: 375px;
  background: #191919;
  border-right: 3px solid #2b2b2b;
}

.rows {
  width: 337px;
  overflow: hidden;
  list-style: none;
}

.rows li {
  display: flex;
  align-items: center;
  width: 335px;
  height: 48px;
  padding-left: 66px;
}

.rows li span {
  flex: none;
  margin: 0 0 2px 7px;
  letter-spacing: 0.2px;
}

.rows .ic {
  width: 28px;
  height: 28px;
}

.rows .fold {
  width: 18px;
  height: 27px;
  margin: 3px 7px 0 3px;
}

.rows .sys {
  height: 21px;
  margin-top: 6px;
}

.rows .drive {
  height: 16px;
  margin-top: 12px;
}

.rows .top {
  margin-top: 16px;
  padding-left: 48px;
}

.rows .top span {
  margin-left: 5px;
}

.rows .top .ic {
  width: 32px;
  height: 28px;
}

.rows .pin {
  width: 20px;
  height: 20px;
  margin: 0 5px 0 auto;
}

.rows .selected {
  background: #333;
}

.scroll {
  display: flex;
  flex-direction: column;
  align-items: center;
  width: 32px;
  background: #171717;
}

.scroll svg {
  width: 12px;
  height: 9px;
  margin-top: 14px;
  fill: none;
  stroke: #808080;
  stroke-width: 2.4;
}

.thumb {
  width: 32px;
  height: 1017px;
  margin: 175px 0 74px;
  background: #4d4d4d;
}

/* file icons */
.files {
  position: relative;
  display: flex;
  padding: 16px 0 0 30px;
}

.file {
  display: flex;
  flex-direction: column;
  align-items: center;
  width: 152.800px;
  text-align: center;
  letter-spacing: 0.2px;
}

.file svg {
  width: 96px;
  height: 96px;
  letter-spacing: 0;
}

.file:not(:first-child) svg {
  margin-left: -1px;
}

.marker {
  position: absolute;
  left: 5px;
  top: -20px;
  width: 480px;
  height: 240px;
  fill: none;
  stroke: #b31566;
  stroke-width: 18;
  stroke-linecap: round;
  stroke-linejoin: round;
}

/* status bar */
.status {
  display: flex;
  align-items: center;
  height: 46px;
  padding: 0 16px 0 28px;
  background: #333;
  color: #e6e6e6;
}

.status i {
  width: 2px;
  height: 22px;
  margin: 0 auto 0 21px;
  background: #fff;
}

.s-list {
  width: 28px;
  height: 26px;
  margin-right: 16px;
}

.s-pic {
  width: 28px;
  height: 21px;
}

/* taskbar */
.taskbar {
  position: relative;
  display: flex;
  height: 60px;
}

.wall {
  position: absolute;
  left: 0;
  top: 0;
  width: 2560px;
  height: 60px;
}

.streaks {
  fill: none;
  filter: blur(7px);
  opacity: 0.85;
}

.start,
.apps,
.tray {
  position: relative;
  display: flex;
  flex: none;
}

.start {
  width: 76.500px;
  padding: 14px 0 0 20px;
}

.start svg,
.apps svg {
  width: 32px;
  height: 32px;
}

.apps div {
  display: flex;
  justify-content: center;
  width: 70px;
  height: 60px;
  padding-top: 14px;
}

.apps.wide div {
  width: 71px;
}

.apps .open {
  background: linear-gradient(#f77fab, #f77fab) 50% 100% / 53px 4px no-repeat;
}

.apps.wide .stacked {
  width: 69px;
  margin: 0 1px;
  background: linear-gradient(#f77fab, #f77fab) 0 100% / 61px 4px no-repeat,
    linear-gradient(#b8688c, #b8688c) 100% 100% / 8px 4px no-repeat,
    linear-gradient(90deg, #444 0, #3a3a3a 60px, #222 61px, #222 62px, #444 63px);
}

.tray {
  align-items: center;
  width: 512px;
  padding-left: 15px;
}

.t-up {
  width: 26px;
  height: 16px;
}

.t-qq {
  width: 22px;
  height: 36px;
  margin: 4px 0 0 24px;
}

.t-bat {
  width: 30px;
  height: 28px;
  margin: 4px 0 0 23px;
}

.t-net {
  width: 24px;
  height: 24px;
  margin: 3px 0 0 22px;
}

.t-vol {
  width: 32px;
  height: 28px;
  margin-left: 18px;
}

.lang {
  width: 50px;
  margin-left: 19px;
}

.clock {
  width: 60px;
  margin-left: 26px;
}

.t-note {
  width: 32px;
  height: 32px;
  margin-left: 39px;
}

.desk {
  width: 2px;
  height: 60px;
  margin-left: 40px;
  background: #777;
}

.mark {
  position: absolute;
  right: 9px;
  top: 31px;
  line-height: 20px;
  font-family: "Liberation Sans", sans-serif;
  font-size: 16px;
  color: rgba(200, 200, 200, 0.75);
}
```
